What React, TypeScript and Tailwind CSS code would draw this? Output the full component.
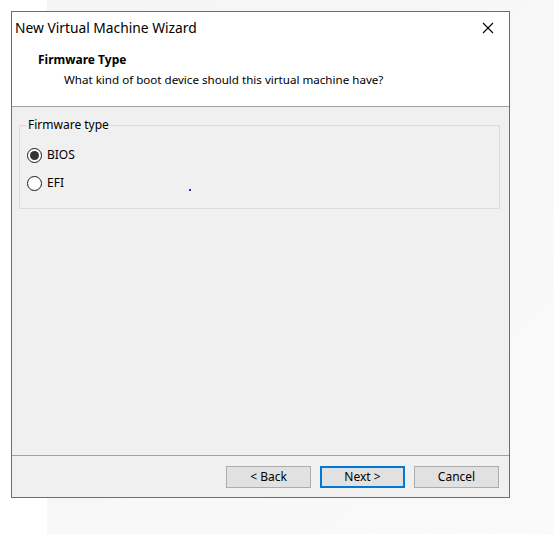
import React from 'react';

function Radio({ label, checked }: { label: string; checked?: boolean }) {
  return (
    <div className="flex items-center h-[16px]">
      <div className="w-[15px] h-[15px] rounded-full border border-[#1a1a1a] bg-white flex items-center justify-center">
        {checked && <div className="w-[9px] h-[9px] rounded-full bg-[#333333]" />}
      </div>
      <span className="ml-[5px] text-[12px] text-black">{label}</span>
    </div>
  );
}

export default function App() {
  return (
    <div className="relative w-[554px] h-[534px] bg-white overflow-hidden" style={{ fontFamily: '"Noto Sans", "Open Sans", sans-serif' }}>
      {/* faint desktop behind the dialog */}
      <div className="absolute left-[47px] top-0 right-0 bottom-0 bg-gradient-to-br from-[#f5f5f5] to-[#fafafa]" />

      <div className="relative ml-[11px] mt-[11px] w-[499px] h-[487px] border border-[#2b7bd0] bg-[#f0f0f0] flex flex-col">
        {/* title + header */}
        <div className="bg-white h-[95px] border-b border-[#a0a0a0] flex flex-col">
          <div className="h-[32px] flex items-center justify-between pl-[3px] pr-[15px]">
            <span className="text-[13.8px] text-black">New Virtual Machine Wizard</span>
            <svg width="12" height="12" viewBox="0 0 12 12" className="text-black">
              <path d="M1 1 L11 11 M11 1 L1 11" stroke="currentColor" strokeWidth="1.1" fill="none" />
            </svg>
          </div>
          <div className="pl-[26px] pt-[8px] text-[12px] font-bold text-black leading-[16px]">Firmware Type</div>
          <div className="pl-[52px] pt-[4px] text-[11.6px] text-black leading-[16px]">What kind of boot device should this virtual machine have?</div>
        </div>

        {/* body */}
        <div className="flex-1 relative border-b border-[#a0a0a0]">
          <div className="relative ml-[7px] mt-[18px] w-[481px] h-[84px] border border-[#dcdcdc]">
            <span className="absolute left-[6px] top-[-9px] px-[2px] bg-[#f0f0f0] text-[12px] leading-[16px] text-black">Firmware type</span>
            <div className="pt-[21px] pl-[7px] flex flex-col gap-[12px]">
              <Radio label="BIOS" checked />
              <Radio label="EFI" />
            </div>
          </div>
          <div className="absolute left-[177px] top-[82px] w-[2px] h-[2px] bg-[#3030c0]" />
        </div>

        {/* footer */}
        <div className="h-[41px] flex justify-end items-start pt-[10px] pr-[10px] gap-[9px]">
          <button className="w-[85px] h-[22px] bg-[#e1e1e1] border border-[#adadad] text-[12px] text-black leading-[20px]">&lt; Back</button>
          <button className="w-[85px] h-[22px] bg-[#e1e1e1] border-2 border-[#0078d7] text-[12px] text-black leading-[18px]">Next &gt;</button>
          <button className="w-[85px] h-[22px] bg-[#e1e1e1] border border-[#adadad] text-[12px] text-black leading-[20px]">Cancel</button>
        </div>
      </div>
    </div>
  );
}
